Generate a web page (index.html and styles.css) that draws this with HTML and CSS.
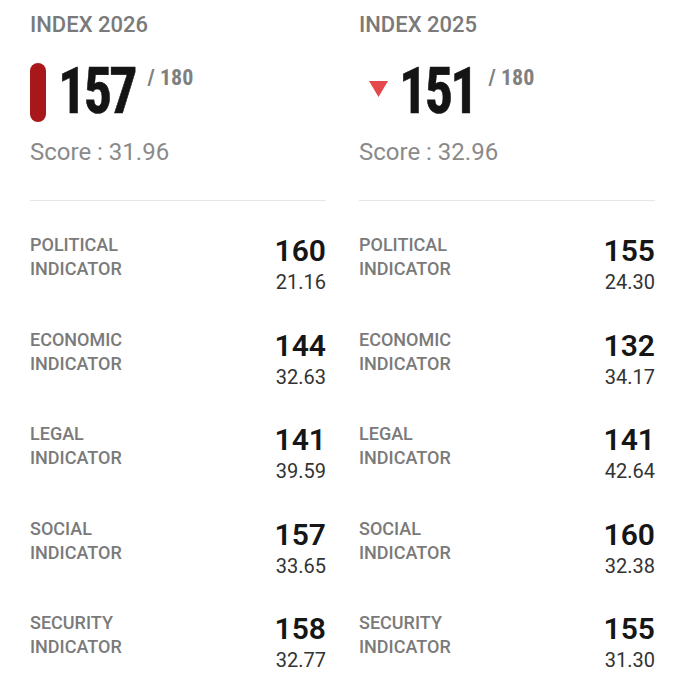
FILE: index.html
```html
<!DOCTYPE html>
<html lang="en">
<head>
<meta charset="utf-8">
<title>Index</title>
<link rel="stylesheet" href="styles.css">
</head>
<body>
<main class="compare">
  <section class="col">
    <h2 class="year">INDEX 2026</h2>
    <div class="rank">
      <span class="pill"></span>
      <span class="rank-num">157</span>
      <span class="rank-of">/ 180</span>
    </div>
    <p class="score">Score : 31.96</p>
    <hr class="divider">
    <ul class="rows">
      <li class="row"><span class="label">POLITICAL<br>INDICATOR</span><span class="vals"><span class="v-rank">160</span><span class="v-score">21.16</span></span></li>
      <li class="row"><span class="label">ECONOMIC<br>INDICATOR</span><span class="vals"><span class="v-rank">144</span><span class="v-score">32.63</span></span></li>
      <li class="row"><span class="label">LEGAL<br>INDICATOR</span><span class="vals"><span class="v-rank">141</span><span class="v-score">39.59</span></span></li>
      <li class="row"><span class="label">SOCIAL<br>INDICATOR</span><span class="vals"><span class="v-rank">157</span><span class="v-score">33.65</span></span></li>
      <li class="row"><span class="label">SECURITY<br>INDICATOR</span><span class="vals"><span class="v-rank">158</span><span class="v-score">32.77</span></span></li>
    </ul>
  </section>
  <section class="col">
    <h2 class="year">INDEX 2025</h2>
    <div class="rank">
      <svg class="tri" width="19" height="16" viewBox="0 0 19 16"><polygon points="0,0 19,0 9.5,16" fill="#e5484b"/></svg>
      <span class="rank-num">151</span>
      <span class="rank-of">/ 180</span>
    </div>
    <p class="score">Score : 32.96</p>
    <hr class="divider">
    <ul class="rows">
      <li class="row"><span class="label">POLITICAL<br>INDICATOR</span><span class="vals"><span class="v-rank">155</span><span class="v-score">24.30</span></span></li>
      <li class="row"><span class="label">ECONOMIC<br>INDICATOR</span><span class="vals"><span class="v-rank">132</span><span class="v-score">34.17</span></span></li>
      <li class="row"><span class="label">LEGAL<br>INDICATOR</span><span class="vals"><span class="v-rank">141</span><span class="v-score">42.64</span></span></li>
      <li class="row"><span class="label">SOCIAL<br>INDICATOR</span><span class="vals"><span class="v-rank">160</span><span class="v-score">32.38</span></span></li>
      <li class="row"><span class="label">SECURITY<br>INDICATOR</span><span class="vals"><span class="v-rank">155</span><span class="v-score">31.30</span></span></li>
    </ul>
  </section>
</main>
</body>
</html>
```

FILE: styles.css
```css
* { box-sizing: border-box; }
html, body { margin: 0; padding: 0; background: #fff; }
body { font-family: Roboto, "Liberation Sans", Arial, sans-serif; }

.compare {
  display: grid;
  grid-template-columns: 296px 296px;
  column-gap: 33px;
  padding: 12px 0 0 30px;
}

.col { display: flex; flex-direction: column; }

.year {
  margin: 0;
  font-size: 22px;
  line-height: 26px;
  font-weight: 500;
  color: #7a7a7a;
}

.rank {
  display: flex;
  align-items: flex-start;
  margin-top: 25px;
  height: 59px;
}

.pill {
  width: 16px;
  height: 59px;
  border-radius: 8px;
  background: #a8181b;
  margin-right: 12px;
}

.tri {
  margin: 18px 11px 0 10px;
}

.rank-num {
  display: inline-block;
  font-family: "Liberation Sans Narrow", "Roboto Condensed", "DejaVu Sans Condensed", sans-serif;
  font-stretch: condensed;
  font-weight: 700;
  font-size: 65px;
  line-height: 50px;
  letter-spacing: -3px;
  color: #141414;
  margin-top: 3px;
  transform: scaleX(0.86);
  transform-origin: left top;
  margin-right: -12px;
  -webkit-text-stroke: 0.6px #141414;
}

.rank-of {
  font-family: "Liberation Sans Narrow", "Roboto Condensed", "DejaVu Sans Condensed", sans-serif;
  font-stretch: condensed;
  font-weight: 700;
  font-size: 22px;
  line-height: 22px;
  color: #808080;
  margin: 4px 0 0 12px;
}

.score {
  margin: 16px 0 0;
  font-size: 24px;
  line-height: 28px;
  color: #8a8a8a;
}

.divider {
  margin: 34px 0 0;
  border: 0;
  height: 1px;
  background: #e6e6e6;
}

.rows {
  list-style: none;
  margin: 32px 0 0;
  padding: 0;
  display: flex;
  flex-direction: column;
  gap: 33.5px;
}

.row {
  display: flex;
  justify-content: space-between;
  align-items: flex-start;
}

.label {
  font-size: 18px;
  line-height: 24px;
  font-weight: 500;
  color: #7a7a7a;
}

.vals {
  display: flex;
  flex-direction: column;
  align-items: flex-end;
}

.v-rank {
  font-size: 30px;
  line-height: 35px;
  font-weight: 600;
  color: #161616;
}

.v-score {
  margin-top: 2px;
  font-size: 20px;
  line-height: 24px;
  color: #333;
}
```
